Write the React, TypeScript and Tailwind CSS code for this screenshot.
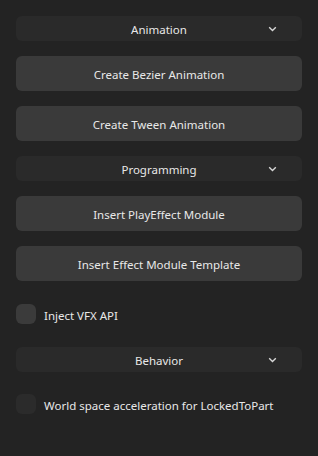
const font = { fontFamily: '"Noto Sans", Inter, sans-serif' };

function Chevron() {
  return (
    <svg width="9" height="6" viewBox="0 0 9 6" className="text-[#d8d8d8]">
      <path d="M1.2 1.2 L4.5 4.4 L7.8 1.2" fill="none" stroke="currentColor" strokeWidth="1.4" />
    </svg>
  );
}

function Header({ label }: { label: string }) {
  return (
    <div className="relative h-[25px] rounded-md bg-[#2a2a2a] flex items-center justify-center">
      <span className="text-[11.5px] leading-none pt-[2px] text-[#e8e8e8]">{label}</span>
      <span className="absolute right-[25px] top-[10px] flex">
        <Chevron />
      </span>
    </div>
  );
}

function Button({ label }: { label: string }) {
  return (
    <div className="h-[35px] rounded-md bg-[#3a3a3a] flex items-center justify-center text-[11.5px] leading-none pt-[3px] text-[#e8e8e8]">
      {label}
    </div>
  );
}

function Check({ label, dim }: { label: string; dim?: boolean }) {
  return (
    <div className="flex items-center gap-2 h-[20px]">
      <div className={`w-5 h-5 rounded-[6px] ${dim ? "bg-[#2b2b2b]" : "bg-[#3b3b3b]"}`} />
      <span className="text-[11.5px] leading-none pt-[3px] text-[#e8e8e8]">{label}</span>
    </div>
  );
}

export default function App() {
  return (
    <div style={font} className="w-[318px] h-[456px] bg-[#232323] px-4 pt-4">
      <Header label="Animation" />
      <div className="mt-[15px] flex flex-col gap-[15px]">
        <Button label="Create Bezier Animation" />
        <Button label="Create Tween Animation" />
      </div>
      <div className="mt-[15px]">
        <Header label="Programming" />
      </div>
      <div className="mt-[15px] flex flex-col gap-[15px]">
        <Button label="Insert PlayEffect Module" />
        <Button label="Insert Effect Module Template" />
      </div>
      <div className="mt-[23px]">
        <Check label="Inject VFX API" />
      </div>
      <div className="mt-[23px]">
        <Header label="Behavior" />
      </div>
      <div className="mt-[22px]">
        <Check label="World space acceleration for LockedToPart" dim />
      </div>
    </div>
  );
}
